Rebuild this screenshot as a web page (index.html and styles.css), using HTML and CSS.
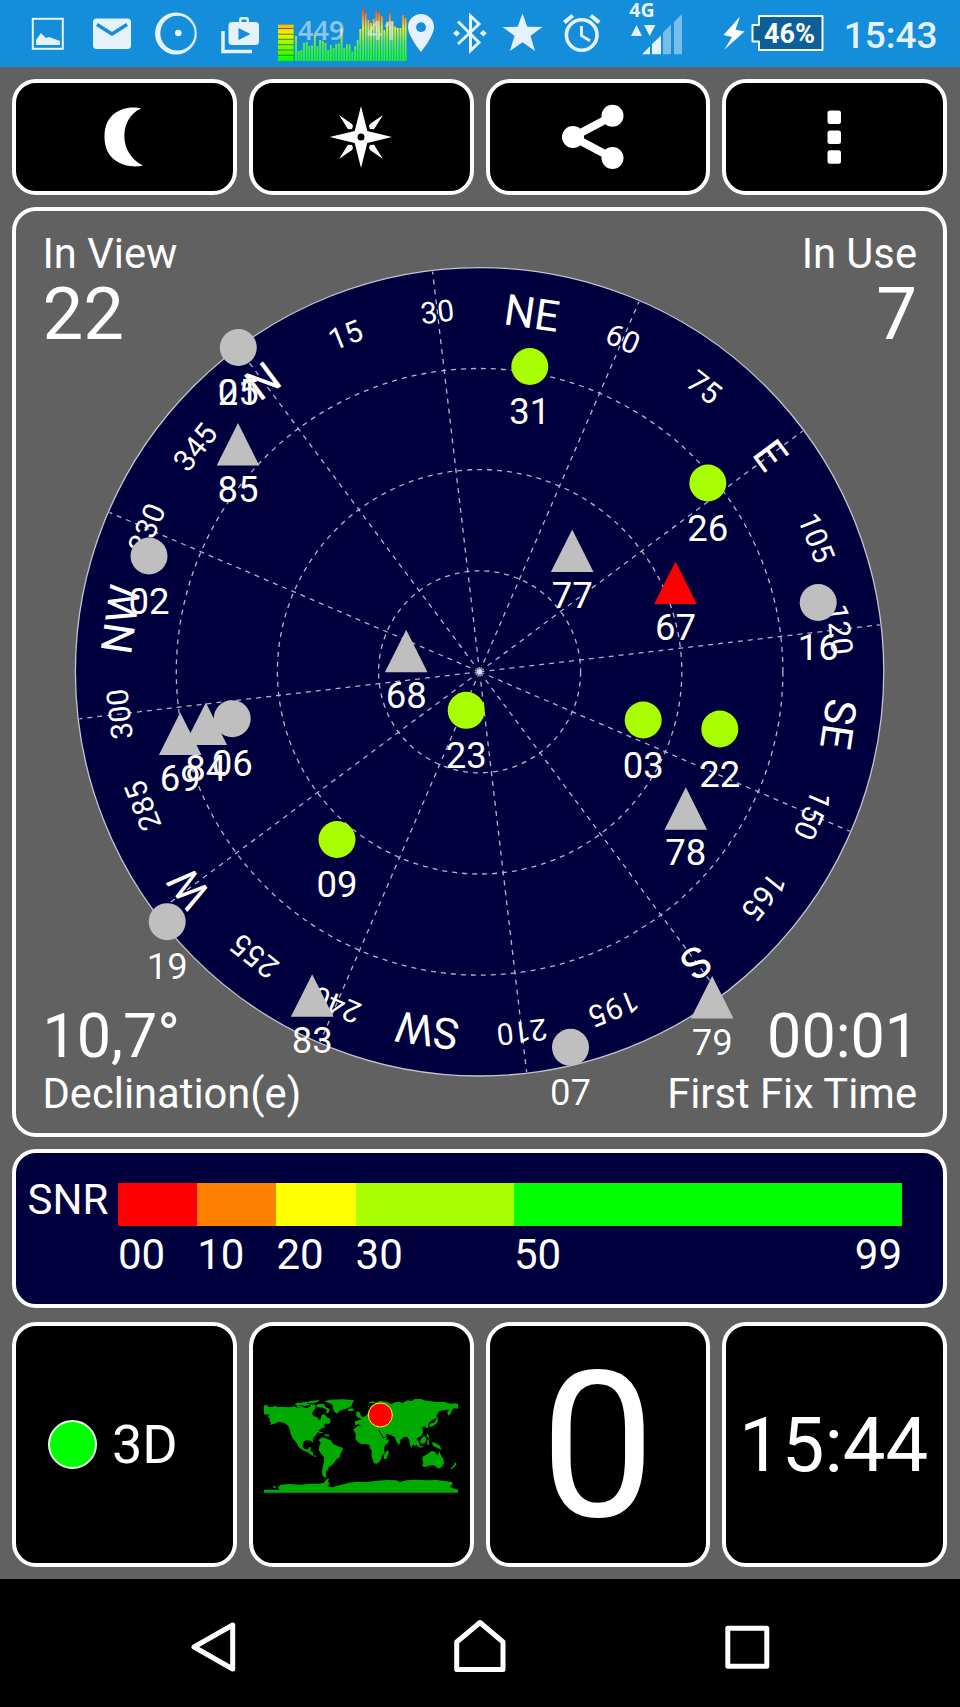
FILE: index.html
```html
<!DOCTYPE html>
<html lang="en">
<head>
<meta charset="utf-8">
<title>GPS Status</title>
<link rel="stylesheet" href="styles.css">
</head>
<body>
<header class="status">
  <svg viewBox="0 0 80 67"><rect x="32.8" y="18.8" width="30" height="30" class="st-line" stroke-width="2"/><path class="st" d="M36 45V40l5-7 5 5 3-1 11 4v4z"/></svg>
  <svg viewBox="80 0 62 67"><rect class="st" x="93" y="18.500" width="38" height="30.500" rx="3.500"/><path d="M97 24.500l15 9.500 15-9.500" fill="none" stroke="#148dda" stroke-width="3.400"/></svg>
  <svg viewBox="142 0 66 67"><path class="st" fill-rule="evenodd" d="M176 12.500a21 21 0 1 1 0 42a21 21 0 1 1 0-42zM178.500 15a18.200 18.200 0 1 0 0 36.400a18.200 18.200 0 1 0 0-36.400z"/><circle class="st-line" cx="177.300" cy="33.200" r="18.300" stroke-width="1.800"/><circle class="st" cx="178.300" cy="33" r="3.300"/></svg>
  <svg viewBox="208 0 62 67"><path class="st" fill-rule="evenodd" d="M232 22h7v-2q0-3 3-3h4q3 0 3 3v2h6.500q3.500 0 3.500 3.500v16q0 3.500-3.500 3.500h-23.500q-3.500 0-3.500-3.500v-16q0-3.500 3.500-3.500zM241.500 22h5v-2.500h-5zM238.500 28v12l12-6z"/><path class="st-line" d="M223 31v20.500h29" stroke-width="3.500"/></svg>
  <svg viewBox="270 0 136 67">
    <defs><linearGradient id="load" gradientUnits="userSpaceOnUse" x1="0" y1="61" x2="0" y2="8"><stop offset="0" stop-color="#1aff14"/><stop offset=".3" stop-color="#4fee50"/><stop offset=".62" stop-color="#f2ee20"/><stop offset=".82" stop-color="#ff8a22"/><stop offset="1" stop-color="#ff3018"/></linearGradient>
    <linearGradient id="cell" x1="0" y1="1" x2="0" y2="0"><stop offset="0" stop-color="#00ff00"/><stop offset=".5" stop-color="#9cfa00"/><stop offset=".75" stop-color="#ffee00"/><stop offset="1" stop-color="#ffb400"/></linearGradient></defs>
    <rect x="278" y="24.600" width="15.600" height="36.400" fill="url(#cell)"/>
    <path d="M278 28.500h15.600M278 34.200h15.600M278 39.300h15.600M278 44.700h15.600M278 50h15.600M278 55.300h15.600" stroke="#2f7a10" stroke-width=".9"/>
    <path stroke="url(#load)" stroke-width="1.900" d="M296 61V36M298.700 61V51M301.400 61V50M304 61V43M306.700 61V42M309.400 61V46M312.100 61V45.500M314.800 61V35M317.400 61V46M320.100 61V40M322.800 61V40.700M325.500 61V43M328.200 61V50M330.800 61V45M333.500 61V48M336.200 61V44M338.900 61V43.500M341.600 61V28.500M344.200 61V48M346.900 61V44.300M349.600 61V44.300M352.300 61V51.500M355 61V46M357.600 61V40M360.300 61V29M363 61V8M365.700 61V13M368.400 61V20M371 61V23M373.700 61V19M376.400 61V9.500M379.100 61V12.500M381.800 61V16M384.400 61V30M387.100 61V21.500M389.800 61V13.500M392.500 61V21.500M395.200 61V26.500M397.800 61V28M400.500 61V28M403.200 61V15M405.600 61V18"/>
    <text class="load-text" x="298" y="40">449</text><text class="load-text" x="367" y="40">41</text>
  </svg>
  <svg viewBox="406 0 38 67"><path class="st" fill-rule="evenodd" d="M421 14a13 13 0 0 1 13 13c0 9-13 25-13 25s-13-16-13-25a13 13 0 0 1 13-13zM421 22.300a4.900 4.900 0 1 0 0 9.800a4.900 4.900 0 1 0 0-9.800z"/></svg>
  <svg viewBox="444 0 66 67"><path class="st-line" stroke-width="3" d="M458 21.500l21 21-8.500 8V16l8.500 8-21 20"/><path class="st" d="M456.500 30l3.500 3.300-3.500 3.300-3.500-3.300zM483.300 30l3.500 3.300-3.500 3.300-3.500-3.300z"/></svg>
  <svg viewBox="510 0 46 67"><path class="st" d="M522.500 13.500l4.800 13.300 15.200.2-12 8.700 4.500 15.300-12.500-8.700-12.500 8.700 4.500-15.300-12-8.700 15.200-.2z"/></svg>
  <svg viewBox="556 0 54 67"><circle class="st-line" cx="581.700" cy="35" r="15.300" stroke-width="3.600"/><path class="st-line" stroke-width="2.800" d="M581.500 26v9.800l8.500 5"/><path class="st-line" stroke-width="4.200" d="M564.300 22.500l8.500-7M599.200 22.500l-8.500-7"/></svg>
  <svg viewBox="610 0 80 67"><text class="net" x="629.300" y="17">4G</text><path class="st" d="M631 36l5.500-11 5.500 11zM644 25h11.500l-5.800 11zM642 54.300v0l8-8v8zM652 54.300V44l9-8.500v18.800z"/><path fill="#79bee9" d="M663 54.300V32.500l8-8v29.800zM674 54.300V22l8-8v40.300z"/></svg>
  <svg viewBox="690 0 134 67"><path fill="#fff" d="M740 16.500l-16.500 18.500 8.500 2-7.500 12.500L744.500 31.500l-9-1.800z"/><path d="M759 16h63.500v34H759v-8.500h-6.500V25h6.500z" fill="#0e5f98" stroke="#f4faff" stroke-width="2" stroke-linejoin="round"/><text class="batt" x="789.500" y="42.700" text-anchor="middle">46%</text></svg>
  <svg viewBox="824 0 136 67"><text class="clock" x="890.600" y="48.300" text-anchor="middle">15:43</text></svg>
</header>

<main class="app">
  <nav class="row tools">
    <button class="tile" aria-label="Night mode"><svg width="225" height="116" viewBox="12 79 225 116"><path d="M141 108.500C131 105.500 104.500 108 104.500 137c0 28 27 31.500 38.500 28.500C118 153.500 119 118 141 108.500z" fill="#fff"/></svg></button>
    <button class="tile" aria-label="Compass"><svg width="225" height="116" viewBox="249 79 225 116"><path fill="#fff" fill-rule="evenodd" d="M361 106l6.300 25 24.700 6-24.700 6-6.300 25-6.300-25-25-6 25-6zM361 133.500a3.500 3.500 0 1 0 0 7a3.500 3.500 0 1 0 0-7z"/><path fill="#fff" d="M339 115l13 9 1 2-1 3-4 .3zM383 115l-13 9-1 2 1 3 4 .3zM339 159l13-9 1-2-1-3-4-.3zM383 159l-13-9-1-2 1-3 4-.3z"/></svg></button>
    <button class="tile" aria-label="Share"><svg width="225" height="116" viewBox="486 79 225 116"><path d="M613.500 116L574 137l39.500 21" fill="none" stroke="#fff" stroke-width="8"/><g fill="#fff"><circle cx="574" cy="137" r="11"/><circle cx="613.500" cy="115.700" r="11"/><circle cx="613.500" cy="158" r="11"/></g></svg></button>
    <button class="tile" aria-label="More"><svg width="225" height="116" viewBox="722.500 79 225 116"><g fill="#fff"><rect x="828" y="110.500" width="13.500" height="13.500" rx="2.500"/><rect x="828" y="130.500" width="13.500" height="13.500" rx="2.500"/><rect x="828" y="150.200" width="13.500" height="13.500" rx="2.500"/></g></svg></button>
  </nav>

  <section class="sky">
    <svg class="dial" viewBox="16.500 211 927 922">
      <defs>
        <circle id="c" r="18.500"/>
        <path id="t" d="M0-42.500L21.300 0h-42.600z"/>
      </defs>
      <g transform="translate(480.100 671.800)">
        <circle r="404.200" fill="#00003f" stroke="#c4c4cc" stroke-width="1.300"/>
        <g class="grid-line">
          <circle r="101"/><circle r="202.200"/><circle r="303.300"/>
          <path d="M0 0V-403" transform="rotate(-36.700)"/><path d="M0 0V-403" transform="rotate(-6.700)"/><path d="M0 0V-403" transform="rotate(23.300)"/><path d="M0 0V-403" transform="rotate(53.300)"/><path d="M0 0V-403" transform="rotate(83.300)"/><path d="M0 0V-403" transform="rotate(113.300)"/><path d="M0 0V-403" transform="rotate(143.300)"/><path d="M0 0V-403" transform="rotate(173.300)"/><path d="M0 0V-403" transform="rotate(203.300)"/><path d="M0 0V-403" transform="rotate(233.300)"/><path d="M0 0V-403" transform="rotate(263.300)"/><path d="M0 0V-403" transform="rotate(293.300)"/>
        </g>
        <circle r="2.500" fill="#d8d8e4"/>
        <g class="deg">
          <text y="-352" transform="rotate(-21.700)">15</text><text y="-352" transform="rotate(-6.700)">30</text><text y="-352" transform="rotate(23.300)">60</text><text y="-352" transform="rotate(38.300)">75</text><text y="-352" transform="rotate(68.300)">105</text><text y="-352" transform="rotate(83.300)">120</text><text y="-352" transform="rotate(113.300)">150</text><text y="-352" transform="rotate(128.300)">165</text><text y="-352" transform="rotate(158.300)">195</text><text y="-352" transform="rotate(173.300)">210</text><text y="-352" transform="rotate(203.300)">240</text><text y="-352" transform="rotate(218.300)">255</text><text y="-352" transform="rotate(248.300)">285</text><text y="-352" transform="rotate(263.300)">300</text><text y="-352" transform="rotate(293.300)">330</text><text y="-352" transform="rotate(308.300)">345</text>
        </g>
        <g class="card">
          <text y="-347.500" transform="rotate(-36.700)">N</text><text y="-347.500" transform="rotate(8.300)">NE</text><text y="-347.500" transform="rotate(53.300)">E</text><text y="-347.500" transform="rotate(98.300)">SE</text><text y="-347.500" transform="rotate(143.300)">S</text><text y="-347.500" transform="rotate(188.300)">SW</text><text y="-347.500" transform="rotate(233.300)">W</text><text y="-347.500" transform="rotate(278.300)">NW</text>
        </g>
      </g>
      <g class="sat">
        <g transform="translate(238.800 347.500)"><use href="#c"/><text y="57.500">21</text><text y="57.500">05</text></g>
        <g transform="translate(149.500 556)"><use href="#c"/><text y="57.500">02</text></g>
        <g transform="translate(818.700 602.500)"><use href="#c"/><text y="57.500">16</text></g>
        <g transform="translate(232.700 718.700)"><use href="#c"/><text y="57.500">06</text></g>
        <g transform="translate(167.700 921.700)"><use href="#c"/><text y="57.500">19</text></g>
        <g transform="translate(571 1047.300)"><use href="#c"/><text y="57.500">07</text></g>
        <g transform="translate(238.500 465.500)"><use href="#t"/><text y="36">85</text></g>
        <g transform="translate(572.700 572)"><use href="#t"/><text y="36">77</text></g>
        <g transform="translate(406.700 672.300)"><use href="#t"/><text y="36">68</text></g>
        <g transform="translate(206.300 745)"><use href="#t"/><text y="36">84</text></g>
        <g transform="translate(180.700 755)"><use href="#t"/><text y="36">69</text></g>
        <g transform="translate(686.300 829.700)"><use href="#t"/><text y="35.500">78</text></g>
        <g transform="translate(312.700 1016.700)"><use href="#t"/><text y="36">83</text></g>
        <g transform="translate(712.700 1018.500)"><use href="#t"/><text y="36">79</text></g>
        <g class="good" transform="translate(530.300 366.500)"><use href="#c"/><text y="57.500">31</text></g>
        <g class="good" transform="translate(708.300 483)"><use href="#c"/><text y="57.500">26</text></g>
        <g class="good" transform="translate(466.700 710.300)"><use href="#c"/><text y="57.500">23</text></g>
        <g class="good" transform="translate(643.700 720)"><use href="#c"/><text y="57.500">03</text></g>
        <g class="good" transform="translate(720.300 729)"><use href="#c"/><text y="57.500">22</text></g>
        <g class="good" transform="translate(337.500 839.500)"><use href="#c"/><text y="57.500">09</text></g>
        <g class="bad" transform="translate(676 604)"><use href="#t"/><text y="36">67</text></g>
      </g>
    </svg>
    <div class="corner tl"><span class="label">In View</span><span class="count">22</span></div>
    <div class="corner tr"><span class="label">In Use</span><span class="count">7</span></div>
    <div class="corner bl"><span class="value">10,7°</span><span class="label">Declination(e)</span></div>
    <div class="corner br"><span class="value">00:01</span><span class="label">First Fix Time</span></div>
  </section>

  <section class="snr">
    <span class="snr-name">SNR</span>
    <div class="scale">
      <i class="s0"></i><i class="s10"></i><i class="s20"></i><i class="s30"></i><i class="s50"></i>
      <span>00</span><span>10</span><span>20</span><span>30</span><span class="ends"><b>50</b><b>99</b></span>
    </div>
  </section>

  <section class="row cards">
    <div class="tile fix"><span class="led"></span><span>3D</span></div>
    <div class="tile map">
      <svg width="194" height="94" viewBox="42 55 582 282">
        <g fill="#00aa00">
          <path d="M42 74h10l4 5h12l6-4 10 4 12-1 22 2 14-3 10 4 14-2 14 3 10-4 4-8 10 2 4 8-6 8-6 10 4 8 12 4 4 8 6-2 2-12 8-4 8 8 10 6 2 10-6 6-10-2-4 6 4 6-10 2-12 10-6 12-6 6-4 8 2 8-8-6-12-2-8 4-4 8 0 8 6 8 10 0 4-6 6 0-4 10 8 4 2 10 10 2-4 3-12-6-10-8-16-6-12-10-6-12-12-14-6-12-2-14-6-12-10-8-18-4-12 6-16 4 6-7-6-4 2-8-6-6 6-6-20-1z"/>
          <path d="M134 70l8-4 14 1 4-3 14 0-4 5 12 2-14 5-18-2-8 2zM172 64l14-4 24-2-8 6-12 4-16 0zM196 76l10-6 16 0 4 8 14 8-4 10-8 2 2-10-14-8-12 0zM140 76h18l-4 4h-14z"/>
          <path d="M222 62l18-5 40-1 32 3-4 8-4 10-12 6-14 4-10 4-6 8-8-4-6-12 0-10-10-5zM294 84l12-1 8 4-8 5-12-2z"/>
          <path d="M196 150l12 2 14 5-10 1-12-4zM222 160l16 2 0 5-12-2z"/>
          <path d="M206 178l10-8 14 4 12 5 8 12 14 6 14 4 0 8-6 8-2 12-12 8-6 10-8 8-8 4-2 8-6 4 0 12 2 8-12-4-2-14 2-14 4-16 0-14-8-8-8-12 2-12 4-10z"/>
          <path d="M316 136l-2-14 12-3 8-2-6-8-10-2 2-10 8-4 4 10 6 8 10-6 8-10 6-18 14-10 14-6 20 3 14 7 10-6 14-2 10 4 14-8 14 2 8-6 14-2 14 6 20 3 18 2 24 0 18 5 14-1 20 5v8l-16 3-8-1-6 6-4 10-8 6-2-10 6-8-10 0-20 4-8 12-2 10-10 4-10 8-4 8 2 8-8 0-6-6-6 6 4 12-6 12-12 8-6 4 4 10-4 10-8-6-2 12-6-10-2-14-6-10-10 0-10 8-4 16-8-8-6-16-12-6-10-4-6 2 8 6-6 10-18 8-10-16-6-8 2-8-20-2-6-6 4-6-8-4-6 6-4-4-10-6-10 2-10 10z"/>
          <path d="M310 146l12-9 20-3 10 0 2 6 12 3 8-2 14 3 6 14 6 14 6 6 12-2-4 10-10 10-2 12 2 8-8 8-2 10-6 10-8 5-8-1-4-12-4-12 2-12-6-10-2-10-12-2-12 0-10-6-8-10 2-12zM406 214l9-6 1 8-6 18-8 1-1-10z"/>
          <path d="M318 96l8-4 2 8 6 10-10 2zM354 66l12-4 12 2-8 4zM428 77l6-6 10-2-8 6zM484 63h14l6 4-14 1zM536 134l8-6 8-2 8-12-2-10 6 8-2 14-12 10-10 3zM488 168l8 2 10 14 4 12 14 2-12 3-10-5-10-14zM512 176l10-10 8 6-4 14-10 4-6-6zM532 178l8-2-4 6 2 10-6 0zM546 184l12 4 10 6 8 14-12-5-10-5-6-6zM530 158l6 6 2 10-8-6z"/>
          <path d="M518 228l10-6 8-4 8-7 12 2 2 8 6 1 4-10 6 14 6 8 2 12-6 12-10 6-8-6-8-4-14 1-10 4-10-2 4-10-3-10zM564 257h8l-2 5-5-1zM614 244l6 6-6 8-10 8-2-3 10-9z"/>
          <path d="M42 327H88L84 320 92 312 120 310 150 312 180 309 206 309 222 306 228 297 238 293 234 303 240 308 232 317 246 320 262 315 280 311 296 306 320 303 350 304 380 300 410 298 440 299 448 304 470 299 500 297 530 299 560 298 585 301 606 304 608 310 600 318 608 323 624 327V336H42zM70 314l10 6-10 2z"/>
        </g>
        <path d="M386 148l14 24 14-6M216 90l12 8 6 14" fill="none" stroke="#000" stroke-width="3"/>
        <circle cx="391" cy="103" r="36" fill="#f00" stroke="#ff0" stroke-width="3"/>
      </svg>
    </div>
    <div class="tile speed"><span>0</span></div>
    <div class="tile time"><span>15:44</span></div>
  </section>
</main>

<footer class="navbar">
  <svg width="960" height="128" viewBox="0 1579 960 128"><g fill="none" stroke="#fff" stroke-width="5" stroke-linejoin="round"><path d="M232.700 1625v44L194 1647z"/><path d="M456.700 1669.500v-27.500L480 1622.500l23 19.500v27.500z"/><rect x="727.800" y="1628.300" width="39" height="38"/></g></svg>
</footer>
</body>
</html>
```
FILE: styles.css
```css
* { box-sizing: border-box; }
body {
  margin: 0;
  width: 960px;
  height: 1707px;
  overflow: hidden;
  background: #616161;
  color: #fff;
  font-family: Roboto, sans-serif;
}
svg { display: block; }

.status {
  display: grid;
  grid-template-columns: 80px 62px 66px 62px 136px 38px 66px 46px 54px 80px 134px 136px;
  height: 67px;
  background: #148dda;
}
.status svg { width: 100%; height: 67px; overflow: visible; }
.st { fill: #e6f2fb; }
.st-line { fill: none; stroke: #e6f2fb; }
.load-text { font: 600 27px "Noto Sans", sans-serif; fill: #dcecf8; fill-opacity: .6; }
.net { font: 700 19.500px "Noto Sans", sans-serif; fill: #e6f2fb; }
.batt { font: 700 27px Roboto, sans-serif; fill: #fff; }
.clock { font: 500 37px Roboto, sans-serif; fill: #e6f2fb; }

.app {
  display: flex;
  flex-direction: column;
  gap: 12px;
  height: 1512px;
  padding: 12px 13px 12px 12px;
}
.row { display: grid; grid-template-columns: repeat(4, 1fr); gap: 12px; }
.tools { height: 116px; }
.tile {
  display: flex;
  align-items: center;
  justify-content: center;
  min-width: 0;
  padding: 0;
  overflow: hidden;
  border: 4px solid #fff;
  border-radius: 24px;
  background: #000;
  color: #fff;
  font-family: inherit;
}
.tile > svg { flex: none; }

.sky {
  position: relative;
  height: 930px;
  border: 4px solid #fff;
  border-radius: 24px;
}
.dial { width: 100%; height: 100%; }
.grid-line { fill: none; stroke: #b4b4c8; stroke-width: 1.300; stroke-dasharray: 5 5; }
.deg, .card, .sat text { text-anchor: middle; fill: #fff; }
.deg { font-size: 30px; }
.card { font-size: 43px; }
.sat { fill: #bfbfbf; font-size: 36.500px; }
.sat text { text-shadow: 0 0 1px rgba(0, 0, 0, .6); }
.good { fill: #a8ff00; }
.bad { fill: #f00; }

.corner { position: absolute; display: flex; flex-direction: column; line-height: 1; }
.tl { top: 21.700px; left: 26.500px; }
.tr { top: 21.700px; right: 26px; align-items: flex-end; }
.bl { bottom: 18.600px; left: 26.500px; }
.br { bottom: 18.600px; right: 26px; align-items: flex-end; }
.label { font-size: 41.700px; }
.count { margin-top: 5px; font-size: 72.500px; }
.value { margin-bottom: 6px; font-size: 61px; }
.br .value { margin-right: -2px; }

.snr {
  display: flex;
  height: 159px;
  padding: 30px 41px 0 11.500px;
  border: 4px solid #fff;
  border-radius: 24px;
  background: #00003f;
  font-size: 42px;
  line-height: 1;
}
.snr-name { width: 90.500px; margin-top: -4px; }
.scale {
  display: grid;
  flex: 1;
  grid-template-columns: 10fr 10fr 10fr 20fr 49fr;
  grid-template-rows: 43px 42px;
  row-gap: 8px;
}
.scale b { font-weight: 400; }
.ends { display: flex; justify-content: space-between; }
.s0 { background: #f00; }
.s10 { background: #ff8000; }
.s20 { background: #ff0; }
.s30 { background: #a8ff00; }
.s50 { background: #0f0; }

.cards { height: 245px; margin-top: 2px; }
.fix { justify-content: flex-start; gap: 15px; padding-left: 32px; font-size: 54px; }
.led {
  width: 49px;
  height: 49px;
  border: 2px solid #e8ffe8;
  border-radius: 50%;
  background: #0f0;
}
.map { padding-top: 2px; }
.speed { padding-top: 4px; font-size: 204px; line-height: 1; }
.time { padding-right: 2px; font-size: 76px; }

.navbar { height: 128px; background: #000; }
```
